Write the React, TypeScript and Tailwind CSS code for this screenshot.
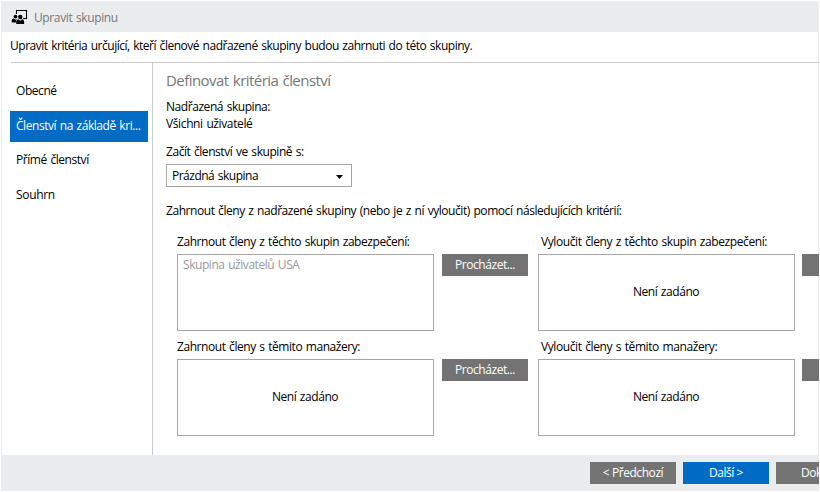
import React from "react";

const browseClass =
  "flex h-[22px] w-[86px] shrink-0 items-center justify-center bg-[#737373] text-white";

function Picker({
  label,
  labelClass,
  item,
  last = false,
}: {
  label: string;
  labelClass: string;
  item?: string;
  last?: boolean;
}) {
  return (
    <div className={last ? "w-[354px] shrink-0" : "w-[361px] shrink-0"}>
      <div className={`h-[21px] whitespace-nowrap pt-px leading-4 ${labelClass}`}>{label}</div>
      <div className={last ? "flex gap-[7px]" : "flex gap-2"}>
        <div className="h-[77px] w-[257px] shrink-0 border border-[#a5a5aa] bg-white">
          {item ? (
            <div className="pt-[2px] pl-[5px] leading-4 text-[#999999]">{item}</div>
          ) : (
            <div className="flex h-full items-center justify-center pr-px pb-px">Není zadáno</div>
          )}
        </div>
        {last ? <button className={browseClass} /> : <button className={browseClass}>Procházet...</button>}
      </div>
    </div>
  );
}

function GroupIcon() {
  return (
    <svg width="17" height="16" viewBox="0 0 17 16" className="shrink-0">
      <path d="M5.5 5V1.5H15.5V9.5H12.2" fill="none" stroke="#000" strokeWidth="1.1" />
      <circle cx="4.5" cy="7.6" r="1.9" />
      <circle cx="9.3" cy="8" r="2.2" />
      <path d="M.7 13.6V11.4Q.9 9.8 2.6 9.6L4.5 10.7 6 9.9Q5 10.7 4.9 12V13.6Z" />
      <path d="M5.2 14.9V12.2Q5.4 10.5 7.3 10.2L9.3 11.7 11.2 10.2Q13 10.5 13.1 12.2V14.9Z" />
    </svg>
  );
}

export default function App() {
  return (
    <div className="h-[492px] w-[820px] overflow-hidden bg-white p-px font-['Open_Sans','Noto_Sans',sans-serif] text-[12px] leading-4 tracking-[-0.44px] text-black [word-spacing:0.9px]">
      <div className="flex h-[490px] w-[818px] flex-col overflow-hidden border-y border-l border-[#ebecee]">
        <header className="flex h-[30px] shrink-0 items-center bg-[#ebecee] pl-[9px]">
          <GroupIcon />
          <h1 className="pt-[2px] pl-[6px] tracking-[-0.38px] text-[#777777]">Upravit skupinu</h1>
        </header>
        <p className="h-[30px] shrink-0 whitespace-nowrap border-r border-[#ebecee] pt-[6px] pl-[8px] tracking-[-0.48px]">
          Upravit kritéria určující, kteří členové nadřazené skupiny budou zahrnuti do této skupiny.
        </p>
        <div className="ml-[9px] h-px shrink-0 bg-[#c9cbcc]" />
        <div className="flex h-[392px] shrink-0">
          <nav className="flex w-[151px] shrink-0 flex-col border-r border-[#c9cbcc] pt-[16px] pl-[8px] pr-[4px]">
            <a className="h-[32px] pt-[4px] pl-[6px]">Obecné</a>
            <a className="h-[31px] w-[138px] whitespace-nowrap bg-[#006cc6] pt-[7px] pl-[6px] text-white">
              Členství na základě kri...
            </a>
            <a className="h-[35px] pt-[10px] pl-[6px]">Přímé členství</a>
            <a className="h-[35px] pt-[10px] pl-[6px] tracking-[-0.33px]">Souhrn</a>
          </nav>
          <main className="w-[666px] shrink-0 whitespace-nowrap border-r border-[#ebecee] pl-[13px]">
            <h2 className="h-[36px] pt-[7px] text-[15px] leading-5 tracking-[-0.55px] text-[#777777]">
              Definovat kritéria členství
            </h2>
            <p className="h-[17px]">Nadřazená skupina:</p>
            <p className="h-[28px] tracking-[-0.38px]">Všichni uživatelé</p>
            <p className="h-[20px]">Začít členství ve skupině s:</p>
            <div className="flex h-[23px] w-[186px] items-center justify-between border border-[#a5a5aa] pl-[5px] pr-[8px]">
              <span className="tracking-[-0.5px]">Prázdná skupina</span>
              <svg width="7" height="4" viewBox="0 0 7 4" className="mt-[3px]">
                <path d="M0 0H7L3.5 4Z" />
              </svg>
            </div>
            <p className="pt-[16px]">
              Zahrnout členy z nadřazené skupiny (nebo je z ní vyloučit) pomocí následujících kritérií:
            </p>
            <div className="flex pt-[14px] pl-[11px]">
              <Picker
                label="Zahrnout členy z těchto skupin zabezpečení:"
                labelClass=""
                item="Skupina uživatelů USA"
              />
              <Picker label="Vyloučit členy z těchto skupin zabezpečení:" labelClass="pl-[3px] tracking-[-0.4px]" last />
            </div>
            <div className="flex pt-[7px] pl-[11px]">
              <Picker label="Zahrnout členy s těmito manažery:" labelClass="" />
              <Picker label="Vyloučit členy s těmito manažery:" labelClass="pl-[3px] tracking-[-0.4px]" last />
            </div>
          </main>
        </div>
        <footer className="flex h-[35px] shrink-0 gap-[7px] bg-[#ebecee] pt-[7px] pl-[588px] text-white">
          <button className={browseClass}>&lt; Předchozí</button>
          <button className="flex h-[22px] w-[86px] shrink-0 items-center justify-center bg-[#006cc6]">
            Další &gt;
          </button>
          <button className="flex h-[22px] w-[86px] shrink-0 items-center bg-[#737373] pl-[25px]">
            Dokončit
          </button>
        </footer>
      </div>
    </div>
  );
}
